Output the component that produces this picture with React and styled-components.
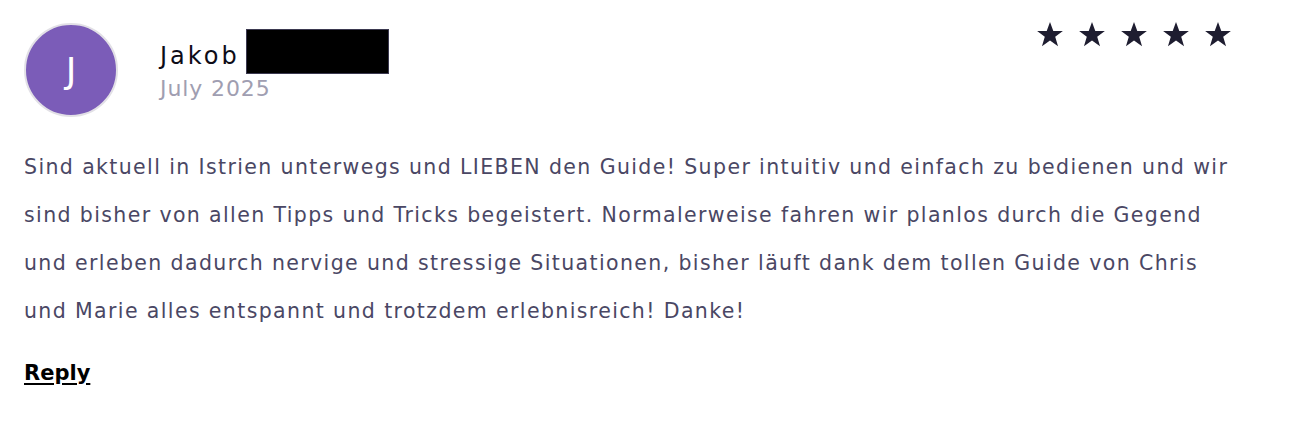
import React from "react";
import styled, { createGlobalStyle } from "styled-components";

const Global = createGlobalStyle`
  html, body { margin: 0; padding: 0; background: #fff; }
  body { font-family: "DejaVu Sans", "Noto Sans", sans-serif; }
`;

const Card = styled.div`
  width: 1300px;
  height: 428px;
  box-sizing: border-box;
  padding: 23px 24px 0 24px;
  display: flex;
  flex-direction: column;
`;

const Header = styled.div`
  display: flex;
  align-items: flex-start;
`;

const Avatar = styled.div`
  width: 90px;
  height: 90px;
  border-radius: 50%;
  background: #7b5cb8;
  border: 2px solid #e2e0e6;
  display: flex;
  align-items: center;
  justify-content: center;
  color: #fff;
  font-size: 36px;
  font-weight: 400;
  flex-shrink: 0;
`;

const Meta = styled.div`
  margin-left: 42px;
  margin-top: 6px;
  display: flex;
  flex-direction: column;
  flex: 1;
`;

const NameRow = styled.div`
  display: flex;
  align-items: flex-end;
  height: 45px;
`;

const Name = styled.span`
  font-size: 24px;
  letter-spacing: 3px;
  color: #0d0c17;
  line-height: 28px;
  margin-bottom: 4px;
`;

const Redact = styled.span`
  display: inline-block;
  width: 141px;
  height: 43px;
  background: #000;
  border: 1px solid #3b3950;
  margin-left: 6px;
`;

const DateText = styled.span`
  font-size: 22px;
  letter-spacing: 0.9px;
  color: #a09eb1;
  line-height: 28px;
  margin-top: 1px;
`;

const Stars = styled.div`
  display: flex;
  gap: 16px;
  margin-top: -1px;
  margin-right: 45px;
`;

const Body = styled.p`
  margin: 26px 0 0 0;
  font-size: 20.5px;
  letter-spacing: 1.38px;
  line-height: 48px;
  color: #4a4764;
`;

const Reply = styled.a`
  margin-top: 26px;
  font-size: 21px;
  font-weight: 700;
  color: #000;
  text-decoration: underline;
  text-underline-offset: 3px;
  text-decoration-thickness: 2px;
  align-self: flex-start;
  cursor: pointer;
`;

const Star = () => (
  <svg width="26" height="25" viewBox="1 0.5 22 21">
    <path
      d="M12 0.5l2.8 7.6h8.1l-6.5 4.9 2.4 7.9L12 16.1l-6.8 4.8 2.4-7.9L1.1 8.1h8.1z"
      fill="#1e1d30"
    />
  </svg>
);

export default function App() {
  return (
    <>
      <Global />
      <Card>
        <Header>
          <Avatar>J</Avatar>
          <Meta>
            <NameRow>
              <Name>Jakob</Name>
              <Redact />
            </NameRow>
            <DateText>July 2025</DateText>
          </Meta>
          <Stars>
            {[0, 1, 2, 3, 4].map((i) => (
              <Star key={i} />
            ))}
          </Stars>
        </Header>
        <Body>
          Sind aktuell in Istrien unterwegs und LIEBEN den Guide! Super intuitiv und einfach zu bedienen und wir
          <br />
          sind bisher von allen Tipps und Tricks begeistert. Normalerweise fahren wir planlos durch die Gegend
          <br />
          und erleben dadurch nervige und stressige Situationen, bisher läuft dank dem tollen Guide von Chris
          <br />
          und Marie alles entspannt und trotzdem erlebnisreich! Danke!
        </Body>
        <Reply>Reply</Reply>
      </Card>
    </>
  );
}
